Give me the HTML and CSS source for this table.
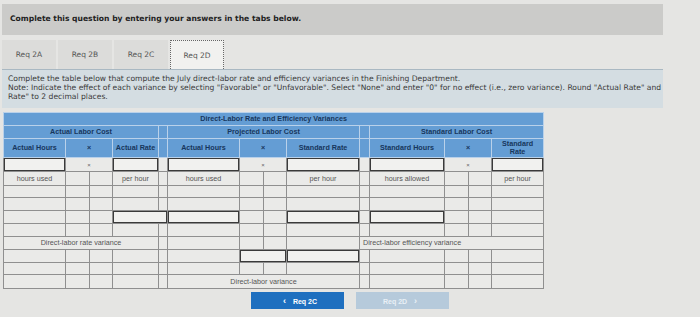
FILE: index.html
```html
<!DOCTYPE html>
<html>
<head>
<meta charset="utf-8">
<link rel="stylesheet" href="styles.css">
</head>
<body>
<div class="page">
  <div class="topbar">Complete this question by entering your answers in the tabs below.</div>
  <div class="tabs">
    <div class="tab">Req 2A</div>
    <div class="tab">Req 2B</div>
    <div class="tab">Req 2C</div>
    <div class="tab active">Req 2D</div>
  </div>
  <div class="instr">
    <p>Complete the table below that compute the July direct-labor rate and efficiency variances in the Finishing Department.</p>
    <p>Note: Indicate the effect of each variance by selecting "Favorable" or "Unfavorable". Select "None" and enter "0" for no effect (i.e., zero variance). Round "Actual Rate" and</p>
    <p>Rate" to 2 decimal places.</p>
  </div>
  <table class="grid">
    <colgroup>
      <col class="c62"><col class="c24"><col class="c23"><col class="c46"><col class="c9">
      <col class="c72"><col class="c24"><col class="c23"><col class="c73"><col class="c10">
      <col class="c75"><col class="c24"><col class="c23"><col class="c52">
    </colgroup>
    <tr class="h1"><th colspan="14">Direct-Labor Rate and Efficiency Variances</th></tr>
    <tr class="h2">
      <th colspan="4">Actual Labor Cost</th><th></th>
      <th colspan="4">Projected Labor Cost</th><th></th>
      <th colspan="4">Standard Labor Cost</th>
    </tr>
    <tr class="h3">
      <th>Actual Hours</th><th colspan="2">×</th><th>Actual Rate</th><th></th>
      <th>Actual Hours</th><th colspan="2">×</th><th>Standard Rate</th><th></th>
      <th>Standard Hours</th><th colspan="2">×</th><th>Standard<br>Rate</th>
    </tr>
    <tr class="r14">
      <td class="in"></td><td colspan="2" class="x">×</td><td class="in"></td><td></td>
      <td class="in"></td><td colspan="2" class="x">×</td><td class="in"></td><td></td>
      <td class="in"></td><td colspan="2" class="x">×</td><td class="in"></td>
    </tr>
    <tr class="r14">
      <td>hours used</td><td></td><td></td><td>per hour</td><td></td>
      <td>hours used</td><td></td><td></td><td>per hour</td><td></td>
      <td>hours allowed</td><td></td><td></td><td>per hour</td>
    </tr>
    <tr class="r12"><td></td><td></td><td></td><td></td><td></td><td></td><td></td><td></td><td></td><td></td><td></td><td></td><td></td><td></td></tr>
    <tr class="r13"><td></td><td></td><td></td><td></td><td></td><td></td><td></td><td></td><td></td><td></td><td></td><td></td><td></td><td></td></tr>
    <tr class="r13">
      <td></td><td></td><td></td><td colspan="2" class="in"></td>
      <td class="in"></td><td></td><td></td><td class="in"></td><td></td>
      <td class="in"></td><td></td><td></td><td></td>
    </tr>
    <tr class="r13"><td></td><td></td><td></td><td></td><td></td><td></td><td></td><td></td><td></td><td></td><td></td><td></td><td></td><td></td></tr>
    <tr class="r13">
      <td colspan="4" class="label">Direct-labor rate variance</td><td></td>
      <td></td><td></td><td></td><td></td>
      <td colspan="5" class="label left">Direct-labor efficiency variance</td>
    </tr>
    <tr class="r13">
      <td></td><td></td><td></td><td></td><td></td>
      <td></td><td colspan="2" class="in"></td><td class="in"></td><td></td>
      <td></td><td></td><td></td><td></td>
    </tr>
    <tr class="r12"><td></td><td></td><td></td><td></td><td></td><td></td><td></td><td></td><td></td><td></td><td></td><td></td><td></td><td></td></tr>
    <tr class="r14">
      <td></td><td></td><td></td><td></td><td></td>
      <td colspan="4" class="label">Direct-labor variance</td><td></td>
      <td></td><td></td><td></td><td></td>
    </tr>
  </table>
</div>
<div class="nav">
  <button class="btn prev"><span class="chev">&lsaquo;</span> Req 2C</button>
  <button class="btn next">Req 2D <span class="chev">&rsaquo;</span></button>
</div>
</body>
</html>
```

FILE: styles.css
```css
html, body {
  margin: 0;
  padding: 0;
}
body {
  width: 700px;
  height: 317px;
  overflow: hidden;
  background: #e5e5e3;
  font-family: "DejaVu Sans", Verdana, sans-serif;
  color: #333;
}
.page {
  width: 661px;
  margin-left: 2px;
  padding-top: 4px;
}
.topbar {
  height: 31px;
  line-height: 29px;
  background: #cbcbc9;
  font-weight: bold;
  font-size: 7.6px;
  padding-left: 8px;
  color: #222;
}
.tabs {
  display: flex;
  gap: 2px;
  margin-top: 5px;
  height: 29px;
  border-bottom: 1px solid #a9b8c2;
}
.tab {
  width: 54px;
  height: 29px;
  box-sizing: border-box;
  background: #dcdcda;
  font-size: 7.5px;
  color: #555;
  display: flex;
  align-items: center;
  justify-content: center;
}
.active {
  background: #f1f1ef;
  border: 1px dotted #666;
  border-bottom: none;
}
.instr {
  background: #d4dde2;
  padding: 4px 0 5px 6px;
  height: 29px;
  overflow: hidden;
}
.instr p {
  margin: 0;
  font-size: 7.6px;
  line-height: 9px;
  white-space: nowrap;
  color: #3a3a3a;
}
.grid {
  margin-top: 4px;
  margin-left: 1px;
  width: 540px;
  table-layout: fixed;
  border-collapse: collapse;
  font-family: "Liberation Sans", Arial, sans-serif;
  font-size: 7.2px;
}
.c62 { width: 62px; }
.c24 { width: 24px; }
.c23 { width: 23px; }
.c46 { width: 46px; }
.c9 { width: 9px; }
.c72 { width: 72px; }
.c73 { width: 73px; }
.c10 { width: 10px; }
.c75 { width: 75px; }
.c52 { width: 52px; }
th {
  background: #649dd4;
  color: #17365c;
  font-weight: bold;
  border: 1px solid #b9d1ea;
  padding: 0;
  text-align: center;
  line-height: 8px;
}
.h1 th, .h2 th { height: 12px; }
.h3 th { height: 18px; }
td {
  border: 1px solid #8f8f8f;
  background: #eaeae8;
  padding: 0;
  text-align: center;
  color: #555;
  line-height: 8px;
}
.r14 td { height: 13px; }
.r13 td { height: 12px; }
.r12 td { height: 11px; }
td.x {
  font-size: 6px;
  color: #666;
}
td.in {
  background: linear-gradient(135deg, #333 0 2px, transparent 2px) no-repeat left top / 4px 4px, #f1f1ef;
  box-shadow: inset 0 0 0 1px #3a3a3a;
}
td.label { text-align: center; }
td.left { text-align: left; padding-left: 3px; }
.nav {
  display: flex;
  justify-content: center;
  gap: 12px;
  margin-top: 3px;
}
.btn {
  width: 93px;
  height: 17px;
  border: none;
  padding: 0;
  font-family: "Liberation Sans", Arial, sans-serif;
  font-weight: bold;
  font-size: 7px;
  color: #fff;
}
.prev { background: #1e6fbf; }
.next { background: #b6cadb; color: #e9f0f6; }
.chev { font-size: 9px; margin: 0 5px; }
```
